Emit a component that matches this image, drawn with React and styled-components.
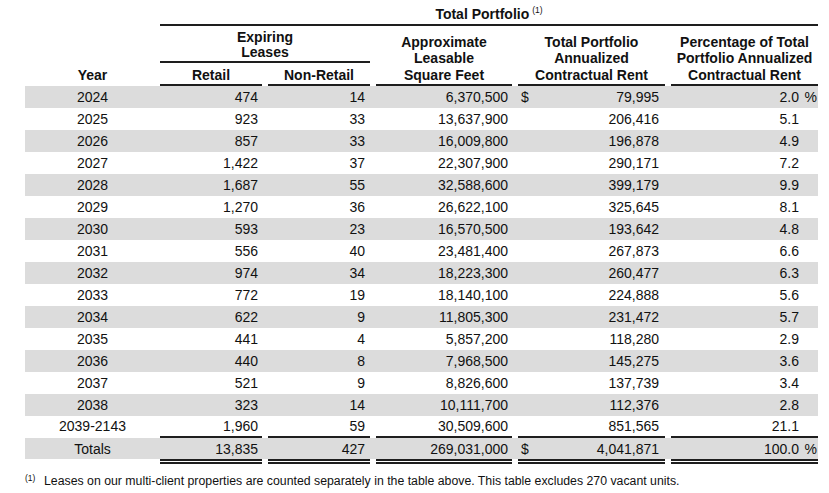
import React from 'react';
import styled, { createGlobalStyle } from 'styled-components';

const GlobalStyle = createGlobalStyle`
  html, body { margin: 0; padding: 0; background: #fff; }
  body { font-family: "Liberation Sans", Arial, sans-serif; color: #111; }
`;

const SHADE = '#dcdcdc';
const LINE = '#1e1e1e';
const COLS = '102px 102px 136px 147px 147px';

const Page = styled.div`
  width: 793px;
  padding-left: 25px;
  font-size: 14px;
`;

const Header = styled.div`
  display: flex;
  height: 86px;
`;

const YearHead = styled.div`
  width: 135px;
  align-self: flex-end;
  text-align: center;
  font-weight: bold;
  line-height: 15px;
  padding-bottom: 3px;
`;

const HeadGrid = styled.div`
  display: grid;
  grid-template-columns: ${COLS};
  grid-template-rows: 26px 37px 23px;
  column-gap: 6px;
`;

const HeadCell = styled.div`
  grid-column: ${(p) => p.$col};
  grid-row: ${(p) => p.$row};
  display: flex;
  flex-direction: column;
  justify-content: flex-end;
  align-items: center;
  text-align: center;
  font-weight: bold;
  white-space: nowrap;
  line-height: ${(p) => p.$lh || 15}px;
  padding-bottom: ${(p) => p.$pb ?? 1}px;
  border-bottom: 2px solid ${LINE};
  box-sizing: border-box;
`;

const Sup = styled.sup`
  font-size: 8.5px;
  font-weight: normal;
  vertical-align: top;
  position: relative;
  top: -4px;
  margin-left: 3px;
`;

const Row = styled.div`
  display: flex;
  height: ${(p) => (p.$totals ? 26 : 22)}px;
  background: ${(p) =>
    p.$totals
      ? `linear-gradient(${SHADE} 21px, transparent 21px)`
      : p.$shade
      ? SHADE
      : 'transparent'};
`;

const YearCell = styled.div`
  width: 135px;
  display: flex;
  align-items: center;
  justify-content: center;
  height: ${(p) => (p.$totals ? 21 : 22)}px;
  padding-bottom: ${(p) => (p.$underline ? 2 : 0)}px;
  box-sizing: border-box;
`;

const Values = styled.div`
  display: grid;
  grid-template-columns: ${COLS};
  column-gap: 6px;
`;

const Cell = styled.div`
  display: flex;
  align-items: center;
  justify-content: ${(p) => (p.$split ? 'space-between' : 'flex-end')};
  padding-right: ${(p) => p.$pr}px;
  box-sizing: border-box;
  height: 100%;
  border-bottom: ${(p) =>
    p.$double ? `5px double ${LINE}` : p.$underline ? `2px solid ${LINE}` : 'none'};
`;

const Dollar = styled.span`
  padding-left: 3px;
`;

const Suffix = styled.span`
  width: 19px;
  text-align: right;
  padding-right: 1px;
  box-sizing: border-box;
`;

const Footnote = styled.div`
  margin-top: 10px;
  font-size: 12.3px;
  line-height: 14px;
  display: flex;
  align-items: flex-start;
`;

const FootMark = styled.span`
  font-size: 8.5px;
  line-height: 8px;
  width: 19px;
`;

const rows = [
  ['2024', '474', '14', '6,370,500', '79,995', '2.0'],
  ['2025', '923', '33', '13,637,900', '206,416', '5.1'],
  ['2026', '857', '33', '16,009,800', '196,878', '4.9'],
  ['2027', '1,422', '37', '22,307,900', '290,171', '7.2'],
  ['2028', '1,687', '55', '32,588,600', '399,179', '9.9'],
  ['2029', '1,270', '36', '26,622,100', '325,645', '8.1'],
  ['2030', '593', '23', '16,570,500', '193,642', '4.8'],
  ['2031', '556', '40', '23,481,400', '267,873', '6.6'],
  ['2032', '974', '34', '18,223,300', '260,477', '6.3'],
  ['2033', '772', '19', '18,140,100', '224,888', '5.6'],
  ['2034', '622', '9', '11,805,300', '231,472', '5.7'],
  ['2035', '441', '4', '5,857,200', '118,280', '2.9'],
  ['2036', '440', '8', '7,968,500', '145,275', '3.6'],
  ['2037', '521', '9', '8,826,600', '137,739', '3.4'],
  ['2038', '323', '14', '10,111,700', '112,376', '2.8'],
  ['2039-2143', '1,960', '59', '30,509,600', '851,565', '21.1'],
];

function DataRow({ data, shade, underline, totals, first }) {
  const [year, retail, non, sqft, rent, pct] = data;
  const line = { $underline: underline, $double: totals };
  const withSigns = first || totals;
  return (
    <Row $shade={shade} $totals={totals}>
      <YearCell $underline={underline} $totals={totals}>{year}</YearCell>
      <Values>
        <Cell $pr={4} {...line}>{retail}</Cell>
        <Cell $pr={5} {...line}>{non}</Cell>
        <Cell $pr={4} {...line}>{sqft}</Cell>
        <Cell $pr={6} $split {...line}>
          <Dollar>{withSigns ? '$' : ''}</Dollar>
          <span>{rent}</span>
        </Cell>
        <Cell $pr={0} {...line}>
          <span>{pct}</span>
          <Suffix>{withSigns ? '%' : ''}</Suffix>
        </Cell>
      </Values>
    </Row>
  );
}

export default function App() {
  return (
    <>
      <GlobalStyle />
      <Page>
        <Header>
          <YearHead>Year</YearHead>
          <HeadGrid>
            <HeadCell $col="1 / -1" $row="1" $pb={2}>
              <div>
                Total Portfolio<Sup>(1)</Sup>
              </div>
            </HeadCell>
            <HeadCell $col="1 / 3" $row="2" $lh={15} $pb={1}>
              <div>Expiring</div>
              <div>Leases</div>
            </HeadCell>
            <HeadCell $col="3" $row="2 / 4" $lh={16.5}>
              <div>Approximate</div>
              <div>Leasable</div>
              <div>Square Feet</div>
            </HeadCell>
            <HeadCell $col="4" $row="2 / 4" $lh={16.5}>
              <div>Total Portfolio</div>
              <div>Annualized</div>
              <div>Contractual Rent</div>
            </HeadCell>
            <HeadCell $col="5" $row="2 / 4" $lh={16.5}>
              <div>Percentage of Total</div>
              <div>Portfolio Annualized</div>
              <div>Contractual Rent</div>
            </HeadCell>
            <HeadCell $col="1" $row="3">Retail</HeadCell>
            <HeadCell $col="2" $row="3">Non-Retail</HeadCell>
          </HeadGrid>
        </Header>
        {rows.map((r, i) => (
          <DataRow
            key={r[0]}
            data={r}
            shade={i % 2 === 0}
            first={i === 0}
            underline={i === rows.length - 1}
          />
        ))}
        <DataRow
          data={['Totals', '13,835', '427', '269,031,000', '4,041,871', '100.0']}
          totals
        />
        <Footnote>
          <FootMark>(1)</FootMark>
          <span>
            Leases on our multi-client properties are counted separately in the table above. This
            table excludes 270 vacant units.
          </span>
        </Footnote>
      </Page>
    </>
  );
}
